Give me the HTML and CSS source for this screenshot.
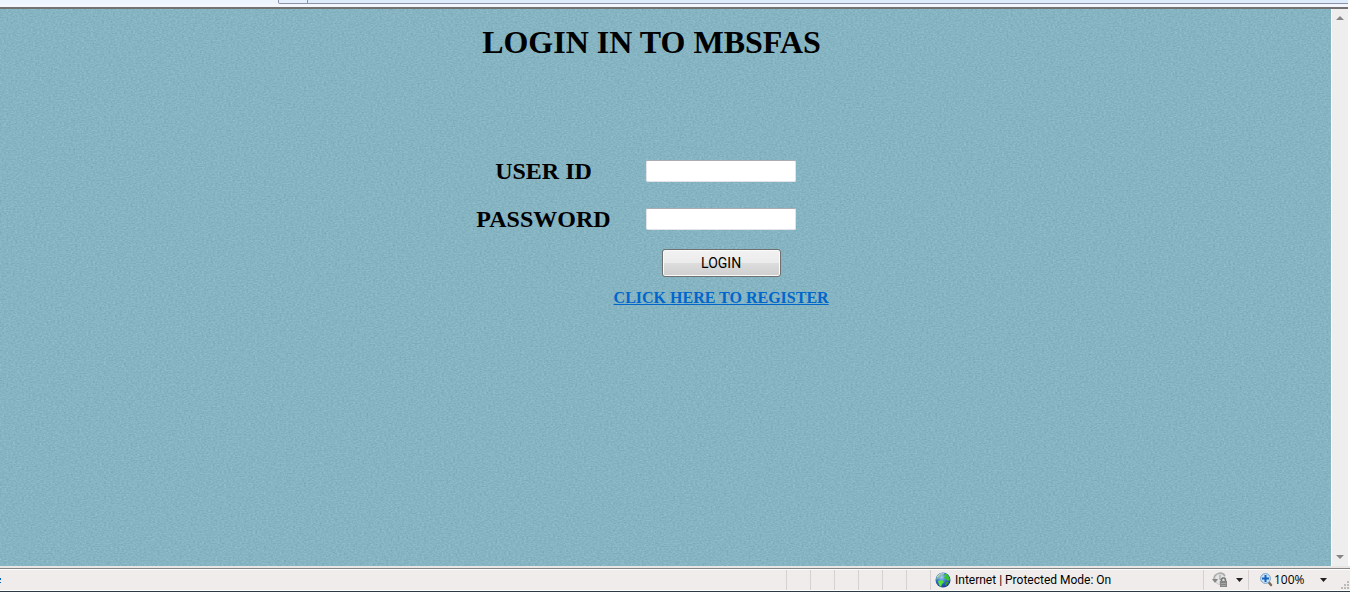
FILE: index.html
```
<!DOCTYPE html>
<html lang="en">
<head>
<meta charset="utf-8">
<title>MBSFAS Login</title>
<link rel="stylesheet" href="styles.css">
</head>
<body>
<div class="window">
  <header class="tabstrip"><div class="tab-lead"></div><div class="tab-small"></div><div class="tab-rest"></div></header>
  <div class="viewport">
    <main class="page">
      <svg class="texture" aria-hidden="true">
        <filter id="grain" x="0" y="0" width="100%" height="100%" color-interpolation-filters="sRGB">
          <feTurbulence type="fractalNoise" baseFrequency="0.45 0.7" numOctaves="2" seed="4"/>
          <feColorMatrix type="matrix" values="0.15 0 0 0 0.449  0.13 0 0 0 0.641  0.13 0 0 0 0.695  0 0 0 0 1"/>
        </filter>
        <rect width="100%" height="100%" filter="url(#grain)"/>
      </svg>
      <div class="content">
        <h1 class="title">LOGIN IN TO MBSFAS</h1>
        <form class="login">
          <label class="label" for="user">USER ID</label>
          <input class="field" id="user" type="text">
          <label class="label" for="pass">PASSWORD</label>
          <input class="field" id="pass" type="password">
          <button class="submit" type="button">LOGIN</button>
          <a class="register" href="#register">CLICK HERE TO REGISTER</a>
        </form>
      </div>
    </main>
    <div class="scrollbar">
      <svg width="8" height="4" viewBox="0 0 8 4"><path d="M4 0L8 4H0Z" fill="#858585"/></svg>
      <svg width="8" height="4" viewBox="0 0 8 4"><path d="M0 0H8L4 4Z" fill="#858585"/></svg>
    </div>
  </div>
  <footer class="status">
    <div class="status-text"><span class="clip"></span></div>
    <div class="cell"></div><div class="cell"></div><div class="cell"></div><div class="cell"></div><div class="cell"></div><div class="cell"></div>
    <div class="zone">
      <svg width="16" height="16" viewBox="0 0 16 16">
        <defs><radialGradient id="sea" cx=".4" cy=".3" r=".75"><stop offset="0" stop-color="#a5cdf5"/><stop offset=".5" stop-color="#3974c8"/><stop offset="1" stop-color="#162d88"/></radialGradient></defs>
        <circle cx="8" cy="8" r="7.5" fill="url(#sea)"/>
        <path d="M2 4L5 1.500L8 2L7 4L5 5L4 6L2 7L1 8Z" fill="#8fb9a0"/>
        <path d="M9 2L12 2L14 5L15 8L13 9L11 7L9 6L10 4Z" fill="#35c629"/>
        <path d="M3 9L7 8L9 10L7 12L6 15L4 13Z" fill="#55e336"/>
        <path d="M11 10L14 10L12 13L10 14Z" fill="#2c9f2d"/>
        <path d="M2 5Q5 1 9 1.500" fill="none" stroke="#d7e7ec" stroke-width="1" opacity=".7"/>
      </svg>
      <span>Internet | Protected Mode: On</span>
    </div>
    <button class="privacy" type="button" aria-label="Privacy">
      <svg width="17" height="16" viewBox="0 0 17 16">
        <path d="M2 8A6 6 0 0 1 13 4" fill="none" stroke="#aaa" stroke-width="1.500"/>
        <path d="M3 8A5 5 0 0 1 13 6V9H8V13Q4 12 3 8Z" fill="#e4e4e4" stroke="#bbb" stroke-width=".7"/>
        <path d="M0 7H6L3 11Z" fill="#858585"/><path d="M8 3V8L10.500 5.500" fill="none" stroke="#999"/>
        <path d="M9.500 10V8Q9.500 6 11.500 6T13.500 8V10" fill="none" stroke="#777" stroke-width="1.500"/>
        <rect x="8" y="9" width="7" height="6" fill="#858585"/><path d="M9 11.500H14M9 13.500H14" stroke="#a5a5a5"/>
      </svg>
      <svg width="7" height="4" viewBox="0 0 7 4"><path d="M0 0H7L3.500 4Z" fill="#222"/></svg>
    </button>
    <button class="zoom" type="button">
      <svg width="13" height="14" viewBox="0 0 13 14">
        <path d="M8.500 9L11 12" stroke="#806b5b" stroke-width="2.500" stroke-linecap="round"/>
        <circle cx="5.500" cy="5.500" r="4.900" fill="#c9e4fb" stroke="#7d9fc0"/>
        <path d="M5.500 2V9M2 5.500H9" stroke="#1462bd" stroke-width="2"/>
      </svg>
      <span class="percent">100%</span>
      <svg width="7" height="4" viewBox="0 0 7 4"><path d="M0 0H7L3.500 4Z" fill="#222"/></svg>
    </button>
    <svg class="grip" width="9" height="9" viewBox="0 0 9 9"><path d="M6 0H8V2H6ZM3 3H5V5H3ZM6 3H8V5H6ZM0 6H2V8H0ZM3 6H5V8H3ZM6 6H8V8H6Z" fill="#bdbaba"/></svg>
  </footer>
</div>
</body>
</html>
```
FILE: styles.css
```
* { box-sizing: border-box; }
body { margin: 0; background: #fff; }
svg { flex: none; }
.window { display: flex; flex-direction: column; height: 100vh; margin-right: 16px; }

.tabstrip { display: flex; flex: none; height: 9px; padding-bottom: 3px; background: #f3f7fd; border-bottom: 2px solid #727272; margin-right: 2px; }
.tab-lead { width: 278px; background: #edf4fe; }
.tab-small { width: 30px; height: 4px; background: #e3effc; border: solid #8a93a8; border-width: 0 1px 1px; border-bottom-left-radius: 2px; }
.tab-rest { flex: 1; height: 4px; background: #deebfa; border-bottom: 1px solid #8a93a8; }

.viewport { display: flex; flex: 1; min-height: 0; }
.page { position: relative; flex: 1; background: #85b3c1; }
.texture { position: absolute; inset: 0; width: 100%; height: 100%; }
.content { position: relative; display: flex; flex-direction: column; align-items: center; gap: 87px; padding: 15px 28px 0 0; font-family: "Liberation Serif", "Times New Roman", serif; font-weight: bold; color: #000; }
.title { margin: 0; font-size: 32px; line-height: 36px; }
.login { display: grid; grid-template-columns: auto auto; grid-template-rows: 48px 48px 40px 30px; column-gap: 3px; margin-left: 2px; align-items: center; justify-items: center; }
.label { font-size: 24px; line-height: 28px; }
.field { width: 150px; height: 22px; padding: 2px 4px; background: #fff; border: 1px solid #e2e3ea; border-top-color: #abadb3; border-radius: 2px; font-size: 14px; }
.submit { grid-column: 2; width: 119px; height: 28px; padding: 0; border: 1px solid #707070; border-radius: 3px; box-shadow: inset 0 0 0 1px #fafafa; background: linear-gradient(#f2f2f2, #ebebeb 50%, #dddddd 50%, #cfcfcf); font: 14px Roboto, Arial, sans-serif; color: #000; }
.register { grid-column: 2; font-size: 16px; line-height: 18px; color: #0066cc; }

.scrollbar { display: flex; flex-direction: column; align-items: center; justify-content: space-between; width: 19px; padding: 7px 2px 7px 1px; background: #eeeeee; border-left: 1px solid #fff; border-right: 2px solid #fff; }

.status { display: flex; flex: none; height: 26px; padding: 2px 0 1px; border-bottom: 1px solid #2c3b48; background: linear-gradient(#e8e6e4 0 2px, #858585 2px 3px, #fff 3px 4px, #f0eceb 4px 24px, #fff 24px); font: 12px/20px "Open Sans", "Segoe UI", sans-serif; color: #000; align-items: flex-end; }
.status > * { height: 20px; }
.status-text { flex: 1; display: flex; align-items: center; }
.clip { width: 1px; height: 5px; border: solid #0066b8; border-width: 2px 0 1px; }
.cell { width: 24px; border-left: 1px solid #d5d1d0; }
.zone { display: flex; align-items: center; gap: 4px; width: 273px; padding-left: 4px; border-left: 1px solid #d5d1d0; white-space: nowrap; font-family: Roboto, "Segoe UI", sans-serif; }
.privacy, .zoom { display: flex; align-items: center; padding: 0; border: 0; border-left: 1px solid #d5d1d0; background: none; color: #000; font: inherit; }
.privacy { width: 45px; padding-left: 8px; gap: 7px; }
.zoom { width: 93px; padding-left: 11px; gap: 1px; }
.percent { width: 45px; text-align: left; }
.status > .grip { height: 9px; }
```
